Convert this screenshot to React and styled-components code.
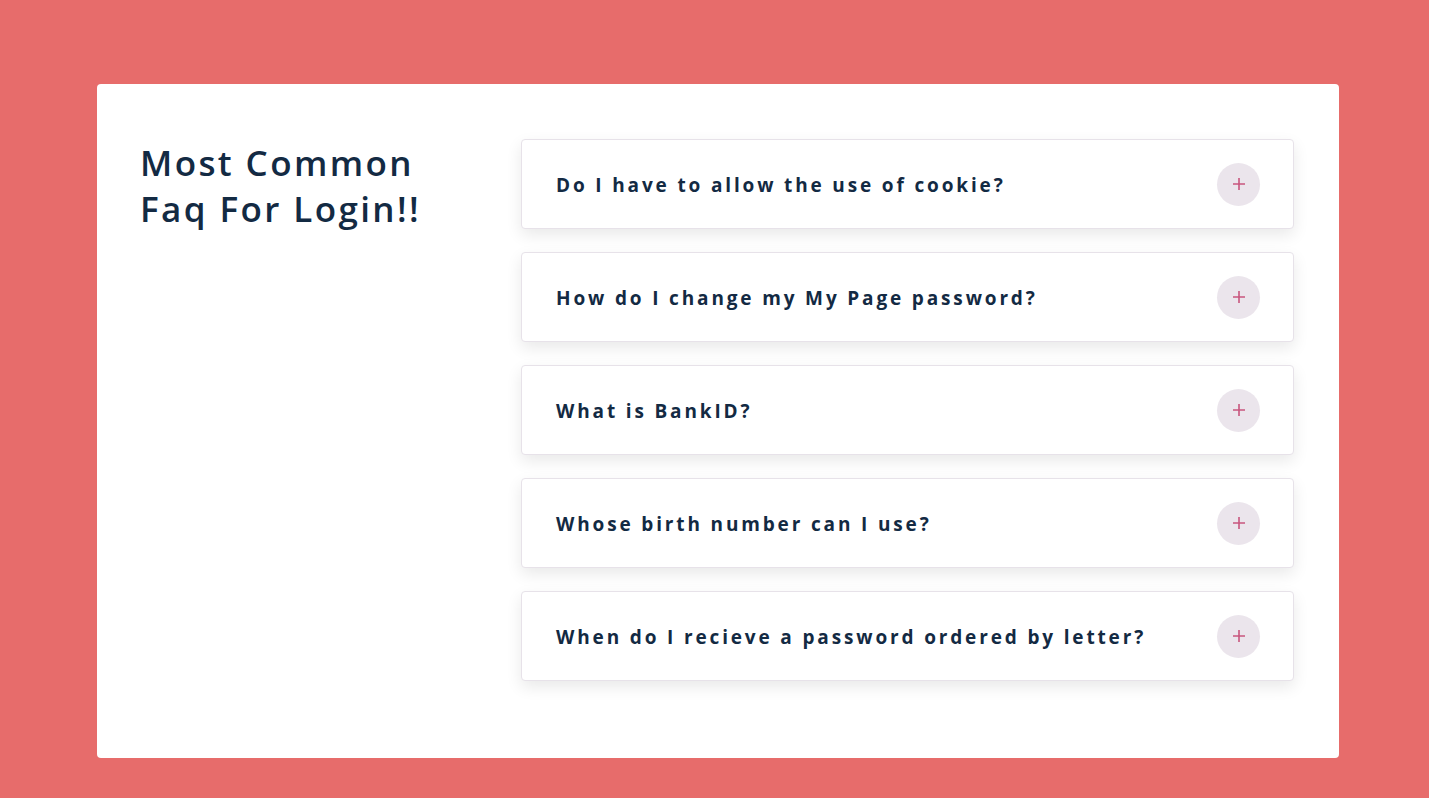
import React from "react";
import styled, { createGlobalStyle } from "styled-components";

const Global = createGlobalStyle`
  html, body { margin: 0; padding: 0; }
  body {
    background: #e76c6b;
    font-family: "Open Sans", "Noto Sans", sans-serif;
    color: #132a43;
  }
`;

const Page = styled.div`
  padding: 84px 90px 40px 97px;
`;

const Card = styled.section`
  background: #ffffff;
  border-radius: 4px;
  min-height: 674px;
  box-sizing: border-box;
  padding: 55px 45px 40px 43px;
  display: grid;
  grid-template-columns: 381px 1fr;
`;

const Title = styled.h2`
  margin: 0;
  font-size: 35px;
  font-weight: 600;
  line-height: 46px;
  letter-spacing: 2.4px;
  color: #132a43;
  padding-top: 1px;
`;

const List = styled.div`
  display: flex;
  flex-direction: column;
  gap: 23px;
`;

const Item = styled.div`
  height: 90px;
  box-sizing: border-box;
  border: 1px solid #e7e2e9;
  border-radius: 4px;
  box-shadow: 0 6px 16px rgba(0, 0, 0, 0.09);
  display: flex;
  align-items: center;
  justify-content: space-between;
  padding: 0 33px 0 34px;
  background: #fff;
`;

const Question = styled.span`
  font-size: 19px;
  font-weight: 700;
  letter-spacing: 2.85px;
  color: #132a43;
  padding-top: 2px;
`;

const Toggle = styled.span`
  width: 43px;
  height: 43px;
  border-radius: 50%;
  background: #ebe5ec;
  display: flex;
  align-items: center;
  justify-content: center;
`;

const questions = [
  "Do I have to allow the use of cookie?",
  "How do I change my My Page password?",
  "What is BankID?",
  "Whose birth number can I use?",
  "When do I recieve a password ordered by letter?",
];

const Plus = () => (
  <svg width="14" height="14" viewBox="0 0 14 14">
    <path d="M7 1v12M1 7h12" stroke="#c9567e" strokeWidth="1.6" />
  </svg>
);

export default function App() {
  return (
    <>
      <Global />
      <Page>
        <Card>
          <Title>
            Most Common
            <br />
            Faq For Login!!
          </Title>
          <List>
            {questions.map((q) => (
              <Item key={q}>
                <Question>{q}</Question>
                <Toggle>
                  <Plus />
                </Toggle>
              </Item>
            ))}
          </List>
        </Card>
      </Page>
    </>
  );
}
